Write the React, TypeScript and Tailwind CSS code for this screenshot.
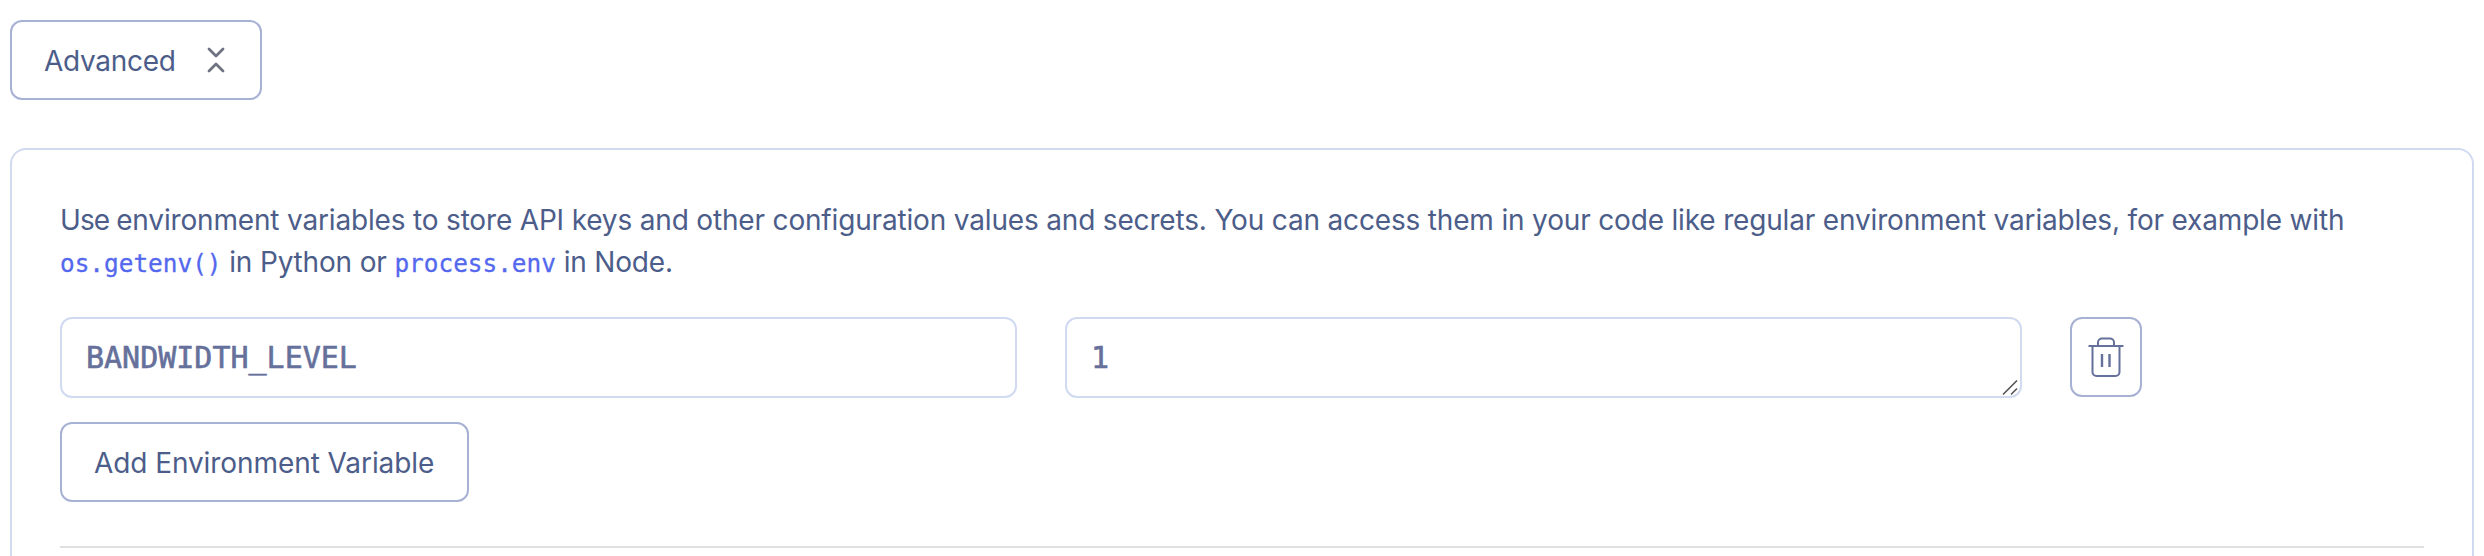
import React from "react";

const sans = "font-['Inter',sans-serif] text-[#4c5d8a]";
const mono = "font-['DejaVu_Sans_Mono',monospace]";

function Code({ children }: { children: React.ReactNode }) {
  return <code className={`${mono} text-[24.4px] leading-none tracking-normal text-[#5468ee] [-webkit-text-stroke:0.3px]`}>{children}</code>;
}

function ChevronsIcon() {
  return (
    <svg width="20" height="28" viewBox="0 0 20 28" fill="none" stroke="#6f7280" strokeWidth="2.8" strokeLinecap="round" strokeLinejoin="round">
      <path d="M3 3l7 7 7-7M3 25l7-7 7 7" />
    </svg>
  );
}

function TrashIcon() {
  return (
    <svg width="36" height="40" viewBox="0 0 36 40" fill="none" stroke="#65709b" strokeWidth="2">
      <path d="M0.5 9H35.5" />
      <path d="M10 9V5.5a4 4 0 0 1 4-4h8a4 4 0 0 1 4 4V9" />
      <path d="M4.5 9V35a4 4 0 0 0 4 4h19a4 4 0 0 0 4-4V9" />
      <path d="M14 17V30M21.5 17V30" strokeWidth="2.4" />
    </svg>
  );
}

export default function App() {
  return (
    <div className={`${sans} h-[556px] w-[2484px] overflow-hidden bg-white px-[10px] pt-5 text-[28px]`}>
      <button className="flex h-20 w-[252px] items-center justify-between rounded-xl border-2 border-[#a7b1d3] pr-[34px] pl-8">
        <span className="pt-0.5 tracking-[-0.3px]">Advanced</span>
        <ChevronsIcon />
      </button>
      <section className="mt-12 h-[440px] w-[2464px] rounded-t-2xl border-2 border-b-0 border-[#d0daf0] px-12 pt-[49px]">
        <p className="leading-[42px] whitespace-nowrap tracking-[-0.17px]">
          <span className="tracking-[-0.9px]">Use </span>
          environment variables to store API keys and other configuration values and secrets. You can access them in your code like regular environment variables, for example with
          <br />
          <Code>os.getenv()</Code> in Python or <Code>process.env</Code> in Node.
        </p>
        <div className={`${mono} mt-[34px] flex gap-12 text-[30px] text-[#65709b] [-webkit-text-stroke:0.6px]`}>
          <div className="flex h-[81px] w-[957px] items-center rounded-xl border-2 border-[#d0daf0] pl-6">BANDWIDTH_LEVEL</div>
          <div className="relative flex h-[81px] w-[957px] items-center rounded-xl border-2 border-[#d0daf0] pl-6">
            1
            <svg className="absolute right-[2px] bottom-0" width="16" height="17" viewBox="0 0 16 17" stroke="#555" strokeWidth="1.6">
              <path d="M1 15.5L15 1.5M9 15.5L15 9.5" />
            </svg>
          </div>
          <button className="flex h-20 w-[72px] items-center justify-center rounded-xl border-2 border-[#a7b1d3]">
            <TrashIcon />
          </button>
        </div>
        <button className="mt-6 flex h-20 w-[409px] items-center rounded-xl border-2 border-[#a7b1d3] pl-8">
          <span className="pt-0.5 whitespace-nowrap tracking-[-0.08px]">Add Environment Variable</span>
        </button>
        <div className="mt-11 h-0.5 w-full bg-[#e0e0e0]" />
      </section>
    </div>
  );
}
